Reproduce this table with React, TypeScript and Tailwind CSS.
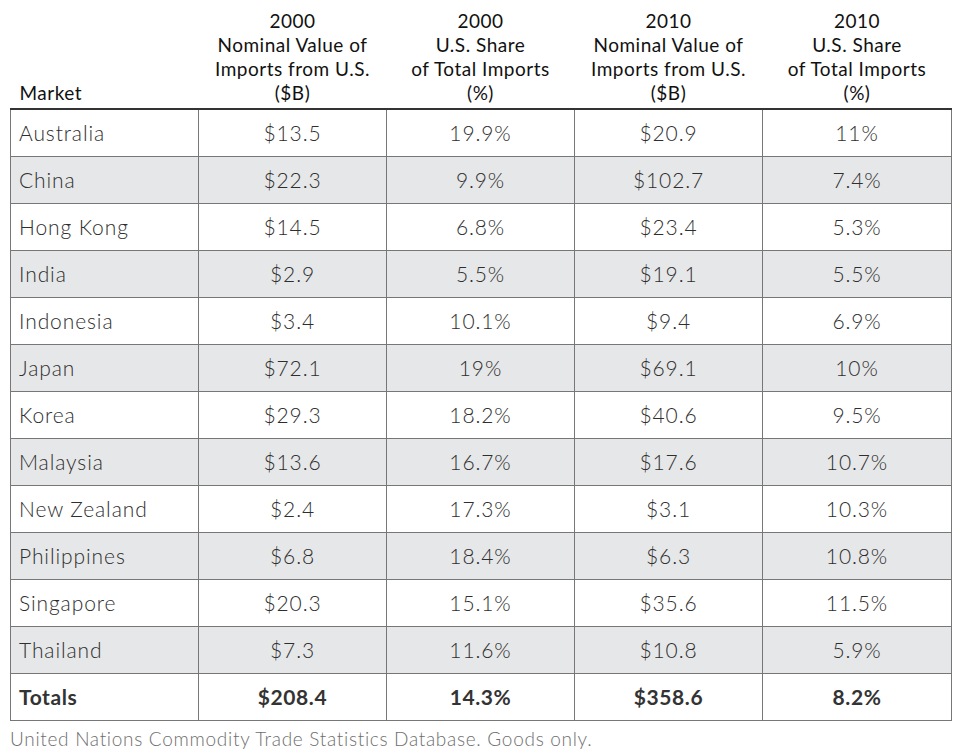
import React from "react";

const rows: [string, string, string, string, string][] = [
  ["Australia", "$13.5", "19.9%", "$20.9", "11%"],
  ["China", "$22.3", "9.9%", "$102.7", "7.4%"],
  ["Hong Kong", "$14.5", "6.8%", "$23.4", "5.3%"],
  ["India", "$2.9", "5.5%", "$19.1", "5.5%"],
  ["Indonesia", "$3.4", "10.1%", "$9.4", "6.9%"],
  ["Japan", "$72.1", "19%", "$69.1", "10%"],
  ["Korea", "$29.3", "18.2%", "$40.6", "9.5%"],
  ["Malaysia", "$13.6", "16.7%", "$17.6", "10.7%"],
  ["New Zealand", "$2.4", "17.3%", "$3.1", "10.3%"],
  ["Philippines", "$6.8", "18.4%", "$6.3", "10.8%"],
  ["Singapore", "$20.3", "15.1%", "$35.6", "11.5%"],
  ["Thailand", "$7.3", "11.6%", "$10.8", "5.9%"],
];

const headers = [
  ["2000", "Nominal Value of", "Imports from U.S.", "($B)"],
  ["2000", "U.S. Share", "of Total Imports", "(%)"],
  ["2010", "Nominal Value of", "Imports from U.S.", "($B)"],
  ["2010", "U.S. Share", "of Total Imports", "(%)"],
];

export default function App() {
  return (
    <div className="w-[960px] h-[756px] bg-white font-['Lato',sans-serif] overflow-hidden">
      <div className="pl-[10px] pt-[6px]">
        <table className="border-collapse w-[941px] table-fixed">
          <colgroup>
            <col className="w-[188px]" />
            <col className="w-[188px]" />
            <col className="w-[188px]" />
            <col className="w-[188px]" />
            <col className="w-[189px]" />
          </colgroup>
          <thead>
            <tr className="h-[103px]">
              <th className="align-bottom text-left pl-[9px] pb-[3px] text-[19px] tracking-[0.5px] font-normal text-[#111] leading-[24px]">
                Market
              </th>
              {headers.map((h, i) => (
                <th
                  key={i}
                  className="align-bottom text-center pb-[3px] text-[19px] tracking-[0.5px] font-normal text-[#111] leading-[24px]"
                >
                  {h.map((l, j) => (
                    <div key={j}>{l}</div>
                  ))}
                </th>
              ))}
            </tr>
          </thead>
          <tbody className="border-t-[2px] border-t-[#333]">
            {rows.map((r, i) => (
              <tr
                key={r[0]}
                className={`h-[47px] ${i % 2 === 1 ? "bg-[#e6e7e8]" : "bg-white"}`}
              >
                {r.map((c, j) => (
                  <td
                    key={j}
                    className={`border border-[#777] text-[21px] tracking-[0.9px] font-light text-[#2e2e2e] ${
                      j === 0 ? "text-left pl-[8px]" : "text-center"
                    }`}
                  >
                    {c}
                  </td>
                ))}
              </tr>
            ))}
            <tr className="h-[47px] bg-white">
              {["Totals", "$208.4", "14.3%", "$358.6", "8.2%"].map((c, j) => (
                <td
                  key={j}
                  className={`border border-[#777] text-[21px] tracking-[0.6px] font-bold text-[#333] ${
                    j === 0 ? "text-left pl-[8px]" : "text-center"
                  }`}
                >
                  {c}
                </td>
              ))}
            </tr>
          </tbody>
        </table>
        <div className="text-[19px] tracking-[0.7px] font-light text-[#6e6e6e] leading-[24px] pt-[6px]">
          United Nations Commodity Trade Statistics Database. Goods only.
        </div>
      </div>
    </div>
  );
}
